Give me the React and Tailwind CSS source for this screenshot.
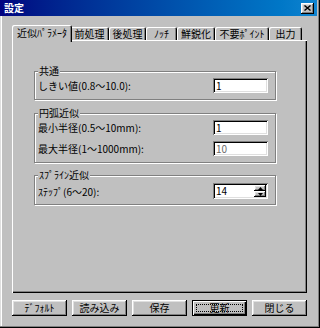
import clsx from 'clsx'

const raised = 'shadow-[inset_-1px_-1px_0_#000,inset_1px_1px_0_#fff,inset_-2px_-2px_0_#808080,inset_2px_2px_0_#dfdfdf]'
const sunken = 'shadow-[inset_1px_1px_0_#808080,inset_-1px_-1px_0_#fff,inset_2px_2px_0_#000,inset_-2px_-2px_0_#dfdfdf]'

const tabs = [
  { label: '近似ﾊﾟﾗﾒｰﾀ', w: 'w-[60px]', active: true },
  { label: '前処理', w: 'w-[39px]' },
  { label: '後処理', w: 'w-[37px]' },
  { label: 'ﾉｯﾁ', w: 'w-[31px]' },
  { label: '鮮鋭化', w: 'w-[38px]' },
  { label: '不要ﾎﾟｲﾝﾄ', w: 'w-[54px]' },
  { label: '出力', w: 'w-[33px]' },
]

function Tab({ label, w, active }) {
  return (
    <div
      className={clsx(
        'flex shrink-0 items-center justify-center rounded-t-[2px] bg-[#c0c0c0] shadow-[inset_1px_1px_0_#fff,inset_-1px_0_0_#000,inset_-2px_0_0_#808080]',
        w,
        active ? 'relative z-10 -mx-[2px] -mb-[2px] h-[17px] pb-[2px]' : 'h-[13px]'
      )}
    >
      {label}
    </div>
  )
}

function Group({ title, className, children }) {
  return (
    <div className={clsx('relative w-[242px] border border-[#808080] shadow-[1px_1px_0_#fff,inset_1px_1px_0_#fff]', className)}>
      <span className="absolute -top-[7px] left-[3px] bg-[#c0c0c0] px-[1px] leading-[12px]">{title}</span>
      {children}
    </div>
  )
}

function Edit({ value, dim }) {
  return (
    <div className={clsx('flex h-[15px] w-[55px] items-center bg-white pl-[3px] leading-[10px]', dim && 'text-[#6a6a6a]', sunken)}>
      {value}
    </div>
  )
}

function Row({ label, children }) {
  return (
    <div className="flex items-center justify-between pl-[3px] pr-[7px]">
      <span>{label}</span>
      {children}
    </div>
  )
}

function Arrow({ down }) {
  return (
    <svg width="5" height="3" viewBox="0 0 5 3">
      <path d={down ? 'M0 0H5L2.5 3Z' : 'M0 3H5L2.5 0Z'} fill="#000" />
    </svg>
  )
}

function Spin({ value }) {
  return (
    <div className={clsx('flex h-[16px] w-[55px] bg-white p-[2px]', sunken)}>
      <div className="flex flex-1 items-center pl-[1px] leading-[10px]">{value}</div>
      <div className="flex w-[12px] flex-col">
        <div className={clsx('flex h-[6px] items-center justify-center bg-[#c0c0c0]', raised)}>
          <Arrow />
        </div>
        <div className={clsx('flex h-[6px] items-center justify-center bg-[#c0c0c0]', raised)}>
          <Arrow down />
        </div>
      </div>
    </div>
  )
}

function Button({ label, def }) {
  return (
    <div
      className={clsx(
        'relative flex h-[16px] w-[55px] items-center justify-center bg-[#c0c0c0] leading-[10px]',
        def
          ? 'shadow-[inset_0_0_0_1px_#000,inset_2px_2px_0_#fff,inset_-2px_-2px_0_#000,inset_-3px_-3px_0_#808080]'
          : raised
      )}
    >
      {label}
      {def && <span className="absolute inset-[4px] border border-dotted border-black" />}
    </div>
  )
}

export default function App() {
  return (
    <div className="relative h-[328px] w-[320px] overflow-hidden bg-[#c0c0c0] font-['Noto_Sans_CJK_JP',sans-serif] text-[10px] text-black shadow-[inset_-1px_-1px_0_#000,inset_-2px_-2px_0_#808080,inset_1px_0_0_#dfdfdf,inset_2px_0_0_#fff]">
      <div className="flex h-[16px] w-[317px] items-center justify-between bg-linear-to-r from-[#000080] to-[#1084d0] pl-[4px] pr-[3px]">
        <span className="text-[10px] font-bold leading-[12px] text-white">設定</span>
        <div className={clsx('flex h-[11px] w-[13px] items-center justify-center bg-[#c0c0c0]', raised)}>
          <svg width="7" height="6" viewBox="0 0 7 6">
            <path d="M0.5 0.5L6.5 5.5M6.5 0.5L0.5 5.5" stroke="#000" strokeWidth="1.4" />
          </svg>
        </div>
      </div>

      <div className="ml-[12px] mt-[9px]">
        <div className="flex h-[15px] items-end pl-[2px] leading-[12px]">
          {tabs.map((t) => (
            <Tab key={t.label} {...t} />
          ))}
        </div>
        <div className="flex h-[253px] w-[295px] flex-col pl-[22px] pt-[31px] shadow-[inset_1px_1px_0_#fff,inset_-1px_-1px_0_#000,inset_-2px_-2px_0_#808080]">
          <Group title="共通" className="h-[29px] pt-[6px]">
            <Row label="しきい値(0.8～10.0):">
              <Edit value="1" />
            </Row>
          </Group>
          <Group title="円弧近似" className="mt-[13px] h-[50px] pt-[6px]">
            <div className="flex flex-col gap-[6px]">
              <Row label="最小半径(0.5～10mm):">
                <Edit value="1" />
              </Row>
              <Row label="最大半径(1～1000mm):">
                <Edit value="10" dim />
              </Row>
            </div>
          </Group>
          <Group title="ｽﾌﾟﾗｲﾝ近似" className="mt-[12px] h-[30px] pt-[7px]">
            <Row label="ｽﾃｯﾌﾟ(6～20):">
              <Spin value="14" />
            </Row>
          </Group>
        </div>
        <div className="mt-[7px] flex gap-[5px]">
          <Button label="ﾃﾞﾌｫﾙﾄ" />
          <Button label="読み込み" />
          <Button label="保存" />
          <Button label="更新" def />
          <Button label="閉じる" />
        </div>
      </div>
    </div>
  )
}
